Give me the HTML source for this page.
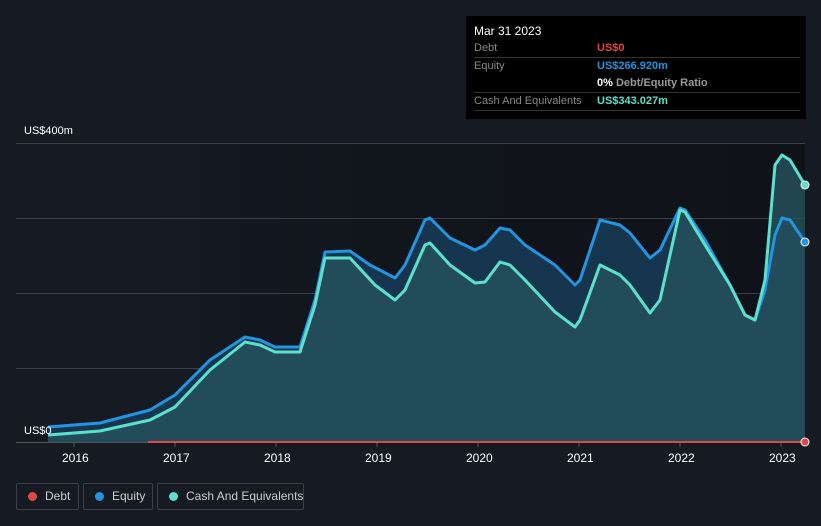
<!DOCTYPE html>
<html><head><style>
body{margin:0;background:#151a23;font-family:"Liberation Sans",sans-serif;}
.wrap{position:relative;width:821px;height:526px;overflow:hidden;background:#151a23;}
.tip{position:absolute;left:466px;top:16px;width:340px;height:103px;background:#000;color:#fff;font-size:11px;}
.tip .r{position:absolute;left:8px;width:326px;height:17px;line-height:17px;border-bottom:1px solid #333;white-space:nowrap;}
.tip .l{color:#888;position:absolute;left:0;}
.tip .v{position:absolute;left:123px;font-weight:bold;}
.lg{position:absolute;top:483px;height:27px;border:1px solid #3a3f48;border-radius:2px;color:#ccc;font-size:12px;line-height:25px;box-sizing:border-box;white-space:nowrap;}
.lg i{position:absolute;left:11px;top:8px;width:9px;height:9px;border-radius:50%;}
.lg span{position:absolute;left:28px;}
.ax{position:absolute;color:#fff;font-size:11px;white-space:nowrap;}
</style></head><body><div class="wrap">
<svg width="821" height="526" style="position:absolute;left:0;top:0">
<defs><linearGradient id="bg" x1="0" x2="1"><stop offset="0" stop-color="#151a23"/><stop offset="0.35" stop-color="#11151c"/><stop offset="1" stop-color="#0f1217"/></linearGradient></defs>
<rect x="148" y="143" width="657" height="299" fill="url(#bg)"/>
<g stroke="#3a3f48" stroke-width="1"><line x1="16" y1="143.5" x2="805" y2="143.5"/><line x1="16" y1="218.5" x2="805" y2="218.5"/><line x1="16" y1="293.5" x2="805" y2="293.5"/><line x1="16" y1="368.5" x2="805" y2="368.5"/><line x1="16" y1="442.5" x2="805" y2="442.5" stroke="#555"/></g>
<g stroke="#555"><line x1="74" y1="442" x2="74" y2="447"/><line x1="175" y1="442" x2="175" y2="447"/><line x1="276" y1="442" x2="276" y2="447"/><line x1="377" y1="442" x2="377" y2="447"/><line x1="478" y1="442" x2="478" y2="447"/><line x1="579" y1="442" x2="579" y2="447"/><line x1="680" y1="442" x2="680" y2="447"/><line x1="781" y1="442" x2="781" y2="447"/></g>
<polygon fill="#163650" points="48,427 100,423 150,410 175,395 210,360 245,337 260,340 275,347 300,347 315,300 325,252 350,251 370,265 395,278 405,265 425,220 430,218 450,238 475,250 485,245 500,228 510,230 525,245 555,265 575,285 580,280 600,220 620,225 630,233 650,258 660,250 680,208 685,210 705,240 730,285 745,315 755,320 765,290 775,235 782,218 790,220 805,242 805,442 48,442"/>
<polygon fill="#24505a" fill-opacity="0.85" points="48,435 100,431 150,420 175,407 210,370 245,342 260,345 275,352 300,352 315,305 325,258 350,258 375,285 395,300 405,290 425,245 430,243 450,265 475,283 485,282 500,262 510,265 525,280 555,312 575,327 580,320 600,265 620,275 630,285 650,313 660,300 680,210 685,212 705,245 730,285 745,315 755,320 765,280 775,165 782,155 790,160 805,185 805,442 48,442"/>
<polyline fill="none" stroke="#2394e0" stroke-width="3" stroke-linejoin="round" points="48,427 100,423 150,410 175,395 210,360 245,337 260,340 275,347 300,347 315,300 325,252 350,251 370,265 395,278 405,265 425,220 430,218 450,238 475,250 485,245 500,228 510,230 525,245 555,265 575,285 580,280 600,220 620,225 630,233 650,258 660,250 680,208 685,210 705,240 730,285 745,315 755,320 765,290 775,235 782,218 790,220 805,242"/>
<polyline fill="none" stroke="#5ce0cc" stroke-width="3" stroke-linejoin="round" points="48,435 100,431 150,420 175,407 210,370 245,342 260,345 275,352 300,352 315,305 325,258 350,258 375,285 395,300 405,290 425,245 430,243 450,265 475,283 485,282 500,262 510,265 525,280 555,312 575,327 580,320 600,265 620,275 630,285 650,313 660,300 680,210 685,212 705,245 730,285 745,315 755,320 765,280 775,165 782,155 790,160 805,185"/>
<line x1="148" y1="442" x2="805" y2="442" stroke="#e04848" stroke-width="2"/>
<circle cx="805" cy="185" r="4" fill="#5ce0cc" stroke="#fff" stroke-width="1"/>
<circle cx="805" cy="242" r="4" fill="#2394e0" stroke="#fff" stroke-width="1"/>
<circle cx="805" cy="442" r="4" fill="#e04848" stroke="#fff" stroke-width="1"/>
</svg>
<div class="ax" style="left:24px;top:125px">US$400m</div>
<div class="ax" style="left:24px;top:425px">US$0</div>
<div class="ax" style="left:62px;top:451px;font-size:12px">2016</div>
<div class="ax" style="left:163px;top:451px;font-size:12px">2017</div>
<div class="ax" style="left:264px;top:451px;font-size:12px">2018</div>
<div class="ax" style="left:365px;top:451px;font-size:12px">2019</div>
<div class="ax" style="left:466px;top:451px;font-size:12px">2020</div>
<div class="ax" style="left:567px;top:451px;font-size:12px">2021</div>
<div class="ax" style="left:668px;top:451px;font-size:12px">2022</div>
<div class="ax" style="left:769px;top:451px;font-size:12px">2023</div>
<div class="tip">
<div style="position:absolute;left:8px;top:8px;font-size:12px">Mar 31 2023</div>
<div class="r" style="top:24px"><span class="l">Debt</span><span class="v" style="color:#e04848">US$0</span></div>
<div class="r" style="top:42px;border:none"><span class="l">Equity</span><span class="v" style="color:#2394e0">US$266.920m</span></div>
<div class="r" style="top:59px"><span class="v">0% <b style="color:#999">Debt/Equity Ratio</b></span></div>
<div class="r" style="top:77px"><span class="l">Cash And Equivalents</span><span class="v" style="color:#5ce0cc">US$343.027m</span></div>
</div>
<div class="lg" style="left:16px;width:63px"><i style="background:#e04848"></i><span>Debt</span></div>
<div class="lg" style="left:83px;width:70px"><i style="background:#2394e0"></i><span>Equity</span></div>
<div class="lg" style="left:157px;width:147px"><i style="background:#5ce0cc"></i><span>Cash And Equivalents</span></div>
</div></body></html>
